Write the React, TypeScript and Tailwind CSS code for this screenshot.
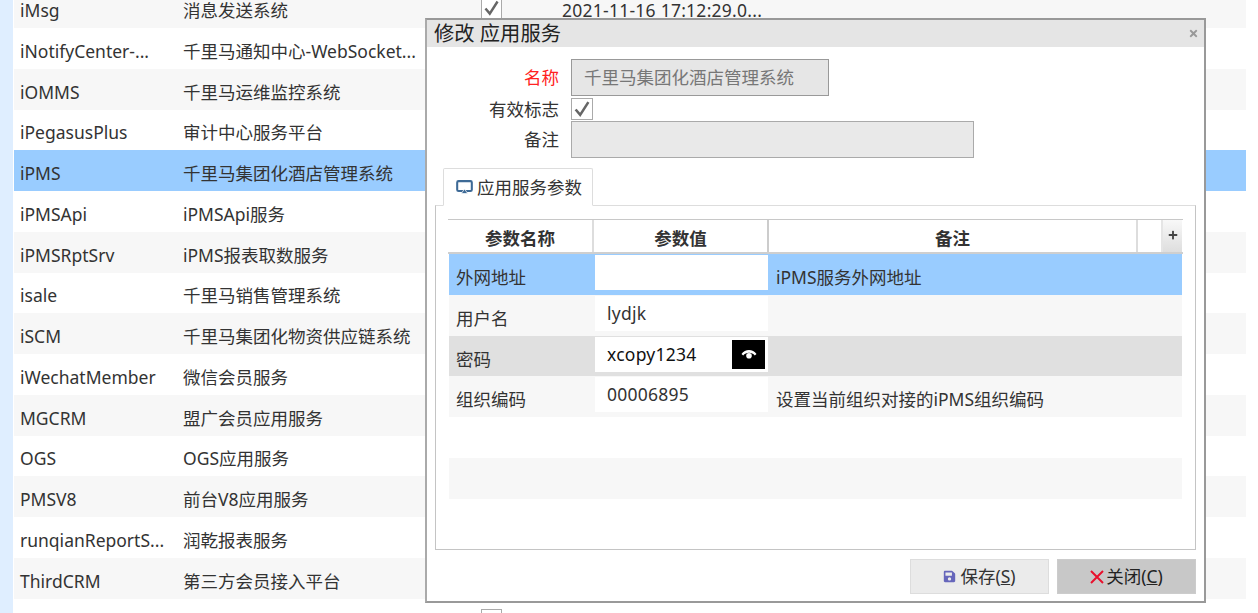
import React from 'react';
import { FaSave, FaTimes, FaPlus } from 'react-icons/fa';

const rows = [
  ['iMsg', '消息发送系统'],
  ['iNotifyCenter-...', '千里马通知中心-WebSocket...'],
  ['iOMMS', '千里马运维监控系统'],
  ['iPegasusPlus', '审计中心服务平台'],
  ['iPMS', '千里马集团化酒店管理系统'],
  ['iPMSApi', 'iPMSApi服务'],
  ['iPMSRptSrv', 'iPMS报表取数服务'],
  ['isale', '千里马销售管理系统'],
  ['iSCM', '千里马集团化物资供应链系统'],
  ['iWechatMember', '微信会员服务'],
  ['MGCRM', '盟广会员应用服务'],
  ['OGS', 'OGS应用服务'],
  ['PMSV8', '前台V8应用服务'],
  ['runqianReportS...', '润乾报表服务'],
  ['ThirdCRM', '第三方会员接入平台'],
  ['', ''],
];

const params = [
  { name: '外网地址', value: '', note: 'iPMS服务外网地址', bg: 'bg-[#99ccff]' },
  { name: '用户名', value: 'lydjk', note: '', bg: 'bg-[#f7f7f7]' },
  { name: '密码', value: 'xcopy1234', note: '', bg: 'bg-[#e0e0e0]', secret: true },
  { name: '组织编码', value: '00006895', note: '设置当前组织对接的iPMS组织编码', bg: 'bg-[#f7f7f7]' },
];

function Check({ className }: { className: string }) {
  return (
    <svg viewBox="0 0 22 22" className={className} fill="none" stroke="#666" strokeWidth="2.8">
      <path d="M4 11.5 L9 17.5 L18 3.5" />
    </svg>
  );
}

function BackgroundGrid() {
  return (
    <div className="flex flex-col ml-[14px] mr-[12px] -mt-[12.6px]">
      {rows.map(([code, title], i) => (
        <div
          key={i}
          className={`h-[40.75px] shrink-0 flex items-center ${i === 4 ? 'bg-[#99ccff]' : i % 2 === 0 ? 'bg-[#f7f7f7]' : 'bg-white'}`}
        >
          <div className="w-[169px] pl-[6px] pt-[5px] whitespace-nowrap">{code}</div>
          <div className="w-[298px] pt-[5px] whitespace-nowrap">{title}</div>
          {(i === 0 || i === 15) && (
            <div className="w-[21px] h-[22px] mt-[1px] mr-[60px] border border-[#aaa] bg-white">
              {i === 0 && <Check className="w-[19px] h-[20px]" />}
            </div>
          )}
          {i === 0 && <div className="pt-[5px] tracking-[0.25px] whitespace-nowrap">2021-11-16 17:12:29.0...</div>}
        </div>
      ))}
    </div>
  );
}

function ParamGrid() {
  return (
    <div className="mx-[12px] mt-[13px]">
      <div className="flex h-[35px] border-t border-[#c8c8c8] border-b-2 border-b-[#cfcfcf] font-bold text-[#333]">
        <div className="w-[146px] flex items-center justify-center pt-[4px] border-r-2 border-[#ddd]">参数名称</div>
        <div className="w-[175px] flex items-center justify-center pt-[4px] border-r-2 border-[#ccc]">参数值</div>
        <div className="w-[369px] flex items-center justify-center pt-[4px] border-r-2 border-[#ddd]">备注</div>
        <div className="w-[25px] border-r-2 border-[#e5e5e5]"></div>
        <div className="w-[19px] bg-gradient-to-b from-[#f8f8f8] to-[#dedede] flex items-center justify-center text-[#444] pb-[3px]">
          <FaPlus className="w-[10px] h-[10px]" />
        </div>
      </div>
      {params.map(p => (
        <div key={p.name} className={`flex h-[40.75px] ml-[1px] mr-[1px] ${p.bg}`}>
          <div className="w-[146px] pl-[7px] pt-[9px] leading-[28px]">{p.name}</div>
          <div className="w-[173px] h-[35px] mt-[1px] bg-white relative">
            <div className={`pl-[12px] leading-[35px] tracking-[0.25px] ${p.secret ? 'text-[#111]' : ''}`}>{p.value}</div>
            {p.secret && (
              <div className="absolute right-[3px] top-[3px] w-[33px] h-[29px] bg-black flex items-center justify-center">
                <svg viewBox="0 0 16 10" className="w-[16px] h-[10px]" fill="#fff">
                  <path d="M0.5 5 C4 -0.5 12 -0.5 15.5 5 L13.8 6.4 C11 3 5 3 2.2 6.4 Z" />
                  <circle cx="8" cy="6.8" r="2.8" />
                </svg>
              </div>
            )}
          </div>
          <div className="flex-1 pl-[8px] pt-[9px] leading-[28px]">{p.note}</div>
        </div>
      ))}
      <div className="h-[40.75px] bg-white"></div>
      <div className="h-[40.75px] mr-[1px] ml-[1px] bg-[#f7f7f7]"></div>
    </div>
  );
}

function EditDialog() {
  return (
    <div className="absolute left-[425px] top-[18px] w-[781px] h-[585px] bg-white border-2 border-[#999] border-l-[#aaa] flex flex-col">
      <div className="h-[27px] shrink-0 bg-[#e5e5e5] flex items-center justify-between pl-[7px] pr-[5px]">
        <span className="text-[20.3px] text-[#222] whitespace-pre">修改 应用服务</span>
        <FaTimes className="w-[11px] h-[11px] text-[#999]" />
      </div>
      <div className="flex flex-col mt-[12px]">
        <div className="flex items-center h-[37px]">
          <label className="w-[132px] text-right text-[#ff2222]">名称</label>
          <div className="ml-[12px] w-[258px] h-[37px] bg-[#e6e6e6] border border-[#999] pl-[12px] leading-[35px] text-[#777]">千里马集团化酒店管理系统</div>
        </div>
        <div className="flex items-center h-[22px] mt-[2px]">
          <label className="w-[132px] text-right">有效标志</label>
          <div className="ml-[12px] w-[22px] h-[22px] border border-[#aaa] bg-white">
            <Check className="w-[20px] h-[20px]" />
          </div>
        </div>
        <div className="flex items-center h-[37px] mt-[1px]">
          <label className="w-[132px] text-right">备注</label>
          <div className="ml-[12px] w-[403px] h-[37px] bg-[#e9e9e9] border border-[#aaa]"></div>
        </div>
      </div>
      <div className="mx-[8px] mt-[10px] flex-1 flex flex-col">
        <div className="ml-[8px] w-[150px] h-[38px] -mb-[1px] relative z-10 bg-white border border-[#ddd] border-b-white flex items-center pl-[12px] gap-[4px] rounded-t-[2px]">
          <svg viewBox="0 0 18 16" className="w-[17px] h-[15px]" fill="none">
            <rect x="1.2" y="1.2" width="15.6" height="10.6" rx="1.5" stroke="#3d6a96" strokeWidth="2.2" />
            <path d="M9 9.5 L12.5 14.5 H5.5 Z" fill="#3d6a96" stroke="#fff" strokeWidth="0.8" />
          </svg>
          <span>应用服务参数</span>
        </div>
        <div className="h-[345px] border border-[#c4c4c4] border-t-[#ddd]">
          <ParamGrid />
        </div>
      </div>
      <div className="h-[53px] shrink-0 flex justify-end items-start gap-[8px] pr-[8px] pt-[9px]">
        <button className="w-[139px] h-[35px] bg-[#ebebeb] border border-[#ddd] flex items-center justify-center gap-[4px]">
          <FaSave className="w-[13px] h-[13px] text-[#6666bb]" />
          <span>保存(<u>S</u>)</span>
        </button>
        <button className="w-[139px] h-[35px] bg-[#c8c8c8] border border-[#ccc] flex items-center justify-center gap-[2px] text-[#222]">
          <svg viewBox="0 0 14 14" className="w-[14px] h-[14px]" stroke="#e8112d" strokeWidth="2" fill="none">
            <path d="M1 1 L13 13 M13 1 L1 13" />
          </svg>
          <span>关闭(<u>C</u>)</span>
        </button>
      </div>
    </div>
  );
}

export default function App() {
  return (
    <div className="relative w-[1258px] h-[613px] overflow-hidden bg-white text-[#333] text-[17.5px] font-['Noto_Sans','Noto_Sans_CJK_SC',sans-serif]">
      <div className="absolute left-0 top-0 bottom-0 w-[13px] bg-[#dfeeff]"></div>
      <BackgroundGrid />
      <EditDialog />
    </div>
  );
}
